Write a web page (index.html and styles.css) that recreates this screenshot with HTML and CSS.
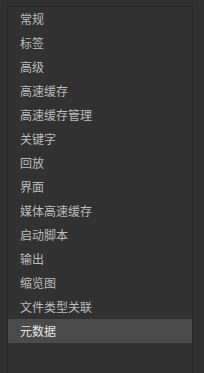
FILE: index.html
```html
<!DOCTYPE html>
<html lang="zh-CN">
<head>
<meta charset="UTF-8">
<title>设置</title>
<link rel="stylesheet" href="styles.css">
</head>
<body>

<div class="panel">
  <ul class="menu">
    <li class="item">常规</li>
    <li class="item">标签</li>
    <li class="item">高级</li>
    <li class="item">高速缓存</li>
    <li class="item">高速缓存管理</li>
    <li class="item">关键字</li>
    <li class="item">回放</li>
    <li class="item">界面</li>
    <li class="item">媒体高速缓存</li>
    <li class="item">启动脚本</li>
    <li class="item">输出</li>
    <li class="item">缩览图</li>
    <li class="item">文件类型关联</li>
    <li class="item selected">元数据</li>
  </ul>
</div>

</body>
</html>
```

FILE: styles.css
```css
* {
  box-sizing: border-box;
}
html, body {
  height: 100%;
}
body {
  margin: 0;
  background-color: #323232;
  font-family: "Noto Sans CJK SC", "Noto Sans", sans-serif;
  font-size: 12px;
  overflow: hidden;
}
.panel {
  margin: 6px 11px 0 7px;
  height: calc(100% - 6px);
  border: 1px solid #262626;
  border-bottom: none;
}
.menu {
  list-style: none;
  margin: 0;
  padding: 0;
}
.item {
  height: 24px;
  line-height: 24px;
  padding-left: 12px;
  color: #bdbdbd;
}
.item.selected {
  background-color: #4b4b4b;
  color: #e6e6e6;
}
```
